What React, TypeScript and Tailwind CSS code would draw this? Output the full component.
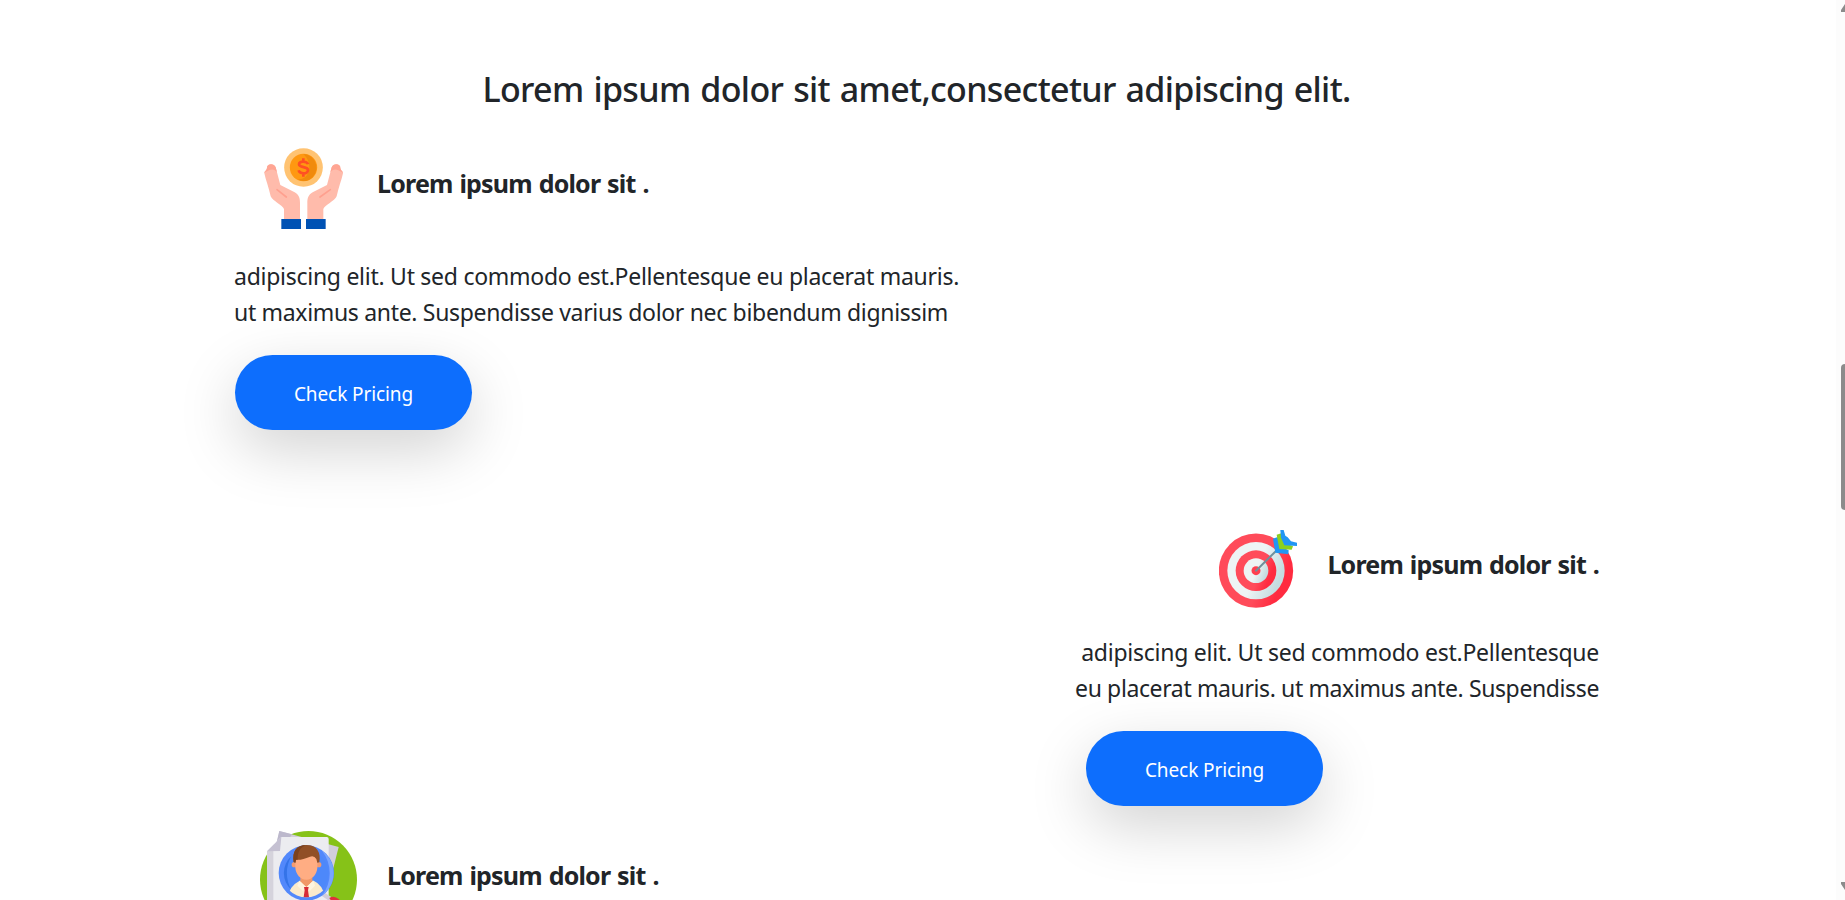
function HandsIcon() {
  return (
    <svg className="h-[83px] w-20 shrink-0" viewBox="42 36 240 249" fill="none">
      <path d="M51 98C49 87 72 82 77 97L91 150L134 172C147 180 150 189 150 204V254H102V222C98 211 68 198 62 184C57 160 47 134 43 115C43 108 49 108 51 98Z" fill="#ffbbab" />
      <path d="M51 99C50 86 72 83 77 97L81 112C76 103 65 101 57 106C52 109 47 110 43 114C43 108 50 107 51 99Z" fill="#ffa593" />
      <path d="M81 164L109 186" stroke="#ffa08f" strokeWidth="5" strokeLinecap="round" />
      <g transform="translate(322 0) scale(-1 1)">
        <path d="M51 98C49 87 72 82 77 97L91 150L134 172C147 180 150 189 150 204V254H102V222C98 211 68 198 62 184C57 160 47 134 43 115C43 108 49 108 51 98Z" fill="#ffbbab" />
        <path d="M51 99C50 86 72 83 77 97L81 112C76 103 65 101 57 106C52 109 47 110 43 114C43 108 50 107 51 99Z" fill="#ffa593" />
        <path d="M81 164L112 186" stroke="#ffa08f" strokeWidth="5" strokeLinecap="round" />
      </g>
      <path d="M94 252H153V282H94ZM168 252H227V282H168Z" fill="#0052b4" />
      <circle cx="160.500" cy="97.500" r="58" fill="#ffc372" />
      <circle cx="160.500" cy="97.500" r="41" fill="#ff9811" />
      <path d="M160 57A41 41 0 0 1 178 134C168 140 150 139 142 132C176 139 194 88 160 57Z" fill="#f08a0c" />
      <path d="M174 88C172 79 147 76 147 88C147 100 174 93 174 105C174 119 148 117 146 106M160 70V80M160 115V125" stroke="#ff5023" strokeWidth="8" />
    </svg>
  );
}

function TargetIcon() {
  return (
    <svg className="h-20 w-[79px] shrink-0" viewBox="42 42 237 240" fill="none">
      <defs>
        <linearGradient id="red" x1="0" x2="1" y1="0.300" y2="0.700">
          <stop offset="0.600" stopColor="#ff4b5a" />
          <stop offset="0.850" stopColor="#ff2b40" />
        </linearGradient>
        <linearGradient id="pale" x1="0" x2="1" y1="0.300" y2="0.700">
          <stop offset="0.500" stopColor="#eef4f5" />
          <stop offset="0.900" stopColor="#c5dce0" />
        </linearGradient>
      </defs>
      <circle cx="153" cy="167" r="111.500" fill="url(#red)" />
      <circle cx="153" cy="167" r="86" fill="url(#pale)" />
      <circle cx="153" cy="167" r="61" fill="url(#red)" />
      <circle cx="153" cy="167" r="37" fill="url(#pale)" />
      <circle cx="153" cy="167" r="13.500" fill="#ff4050" />
      <path d="M153 167L220 101" stroke="#708f9b" strokeWidth="6" strokeLinecap="round" />
      <path d="M204 71L218 66L226 96L251 106L250 118L211 113Z" fill="#2196f3" />
      <path d="M215 59L229 55L240 84L264 94L260 104L223 102Z" fill="#8bd01e" />
      <path d="M226 45H236L241 62L248 67L258 79L276 83V93L238 91L228 68Z" fill="#2196f3" />
    </svg>
  );
}

function ProfileIcon() {
  return (
    <svg className="h-[100px] w-[98px] shrink-0" viewBox="30 30 294 300" fill="none">
      <defs>
        <clipPath id="lens"><circle cx="169" cy="159" r="73" /></clipPath>
      </defs>
      <circle cx="175.500" cy="178.500" r="145.500" fill="#86c218" />
      <path d="M88 33L266 81L228 232L70 225L80 70Z" fill="#d2ceda" />
      <path d="M88 33L126 43L102 80L78 75Z" fill="#bcb8cc" />
      <path d="M94 51H230Q236 51 236 57V330H51V94Z" fill="#ececf0" />
      <path d="M51 94L70 88V330H51Z" fill="#d5d3dc" />
      <path d="M94 51L90 93L51 94Z" fill="#c5c1d2" />
      <path d="M218 222L244 239" stroke="#d1ccda" strokeWidth="13" />
      <path d="M238 234Q252 225 267 238L320 300H280Z" fill="#e02f3d" />
      <circle cx="169" cy="159" r="83" fill="#5288fb" />
      <circle cx="169" cy="159" r="67" fill="#4d88fa" />
      <path d="M124 109A67 67 0 0 0 124 209A100 100 0 0 1 124 109Z" fill="#3473e8" />
      <path d="M216 92A83 83 0 0 1 216 227A110 110 0 0 0 216 92Z" fill="#78a5ff" />
      <g clipPath="url(#lens)">
        <path d="M112 242Q114 200 149 182H191Q223 196 226 242Z" fill="#fbeacb" />
        <path d="M151 162H187V184L169 203L151 184Z" fill="#f19868" />
        <path d="M148 182L169 201L190 182L195 197L180 212L169 203L158 212L142 197Z" fill="#fff4df" />
        <path d="M162 201H176L174 211L179 245H159L164 211Z" fill="#d72c38" />
      </g>
      <circle cx="133" cy="134" r="8" fill="#f49b70" />
      <circle cx="206" cy="134" r="8" fill="#f49b70" />
      <path d="M136 105H202V143C201 162 187 179 169 179C151 179 137 162 136 143Z" fill="#ffad83" />
      <path d="M131 126C126 94 139 75 170 75C200 75 214 97 208 127L202 128L199 117Q192 105 180 110Q155 121 138 119L136 128Z" fill="#914f26" />
      <path d="M131 126C126 94 139 75 170 75C152 81 142 94 143 119L138 119L136 128Z" fill="#7b421f" />
    </svg>
  );
}

function PricingButton() {
  return (
    <button className="h-[75px] w-[237px] rounded-[40px] bg-[#0d6efd] pt-[3px] text-[19px] tracking-[-0.1px] text-white shadow-[0_20px_60px_rgba(0,0,0,0.175)]">
      Check Pricing
    </button>
  );
}

function Title() {
  return (
    <h2 className="text-[25px] leading-8 font-bold tracking-[-0.8px] whitespace-nowrap [word-spacing:1.1px]">
      Lorem ipsum dolor sit .
    </h2>
  );
}

export default function App() {
  return (
    <div className="flex h-[900px] w-full overflow-hidden bg-white font-['Noto_Sans',sans-serif] text-[#212529]">
      <main className="flex-1">
        <h1 className="pt-[68px] pr-[3px] text-center text-[34px] leading-[42px] font-medium tracking-[-0.65px] [word-spacing:1.700px]">
          Lorem ipsum dolor sit amet,consectetur adipiscing elit.
        </h1>
        <section className="mt-[37px] ml-[235px]">
          <div className="flex pl-[29px]">
            <HandsIcon />
            <div className="mt-5 ml-[33px]"><Title /></div>
          </div>
          <p className="mt-7 -ml-px text-[23px] leading-9 whitespace-nowrap">
            <span className="tracking-[-0.27px]">adipiscing elit. Ut sed commodo est.Pellentesque eu placerat mauris.</span>
            <br />
            <span className="tracking-[-0.32px]">ut maximus ante. Suspendisse varius dolor nec bibendum dignissim</span>
          </p>
          <div className="mt-[25px]"><PricingButton /></div>
        </section>
        <section className="mt-[99px] mr-[237px] ml-auto w-[525px]">
          <div className="flex justify-end">
            <TargetIcon />
            <div className="mt-[19px] ml-[29px]"><Title /></div>
          </div>
          <p className="mt-[25px] text-right text-[23px] leading-9 whitespace-nowrap">
            <span className="tracking-[-0.25px]">adipiscing elit. Ut sed commodo est.Pellentesque</span>
            <br />
            <span className="tracking-[-0.38px]">eu placerat mauris. ut maximus ante. Suspendisse</span>
          </p>
          <div className="mt-[25px] ml-3"><PricingButton /></div>
        </section>
        <section className="mt-6 ml-[260px] flex">
          <ProfileIcon />
          <div className="mt-[29px] ml-[29px]"><Title /></div>
        </section>
      </main>
      <aside className="flex w-[9px] flex-col items-end bg-[#fcfcfc]">
        <svg className="mt-1 h-2 w-1" viewBox="0 0 4 8"><path d="M4 0V8H0V6Z" fill="#8b8b8b" /></svg>
        <div className="mt-[352px] h-[146px] w-1 rounded-l-[4px] bg-[#8b8b8b]" />
        <svg className="mt-[372px] h-2 w-1" viewBox="0 0 4 8"><path d="M0 0H4V8L0 2Z" fill="#8b8b8b" /></svg>
      </aside>
    </div>
  );
}
